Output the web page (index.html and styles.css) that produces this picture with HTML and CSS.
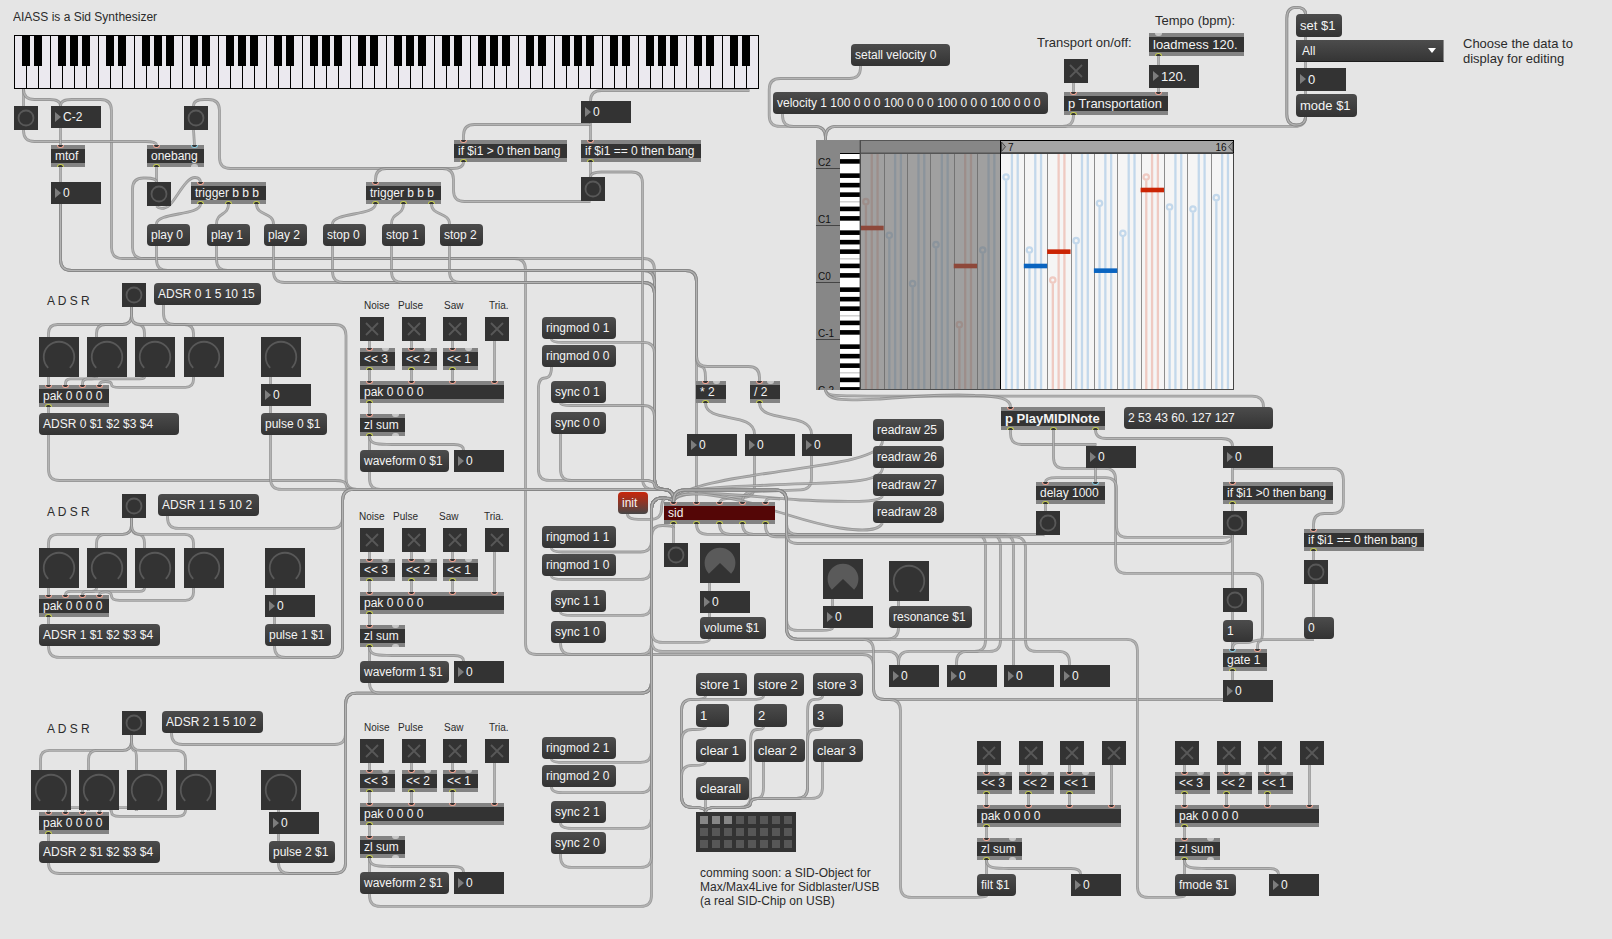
FILE: index.html
```html
<!DOCTYPE html>
<html lang="en">
<head>
<meta charset="utf-8">
<title>AIASS is a Sid Synthesizer</title>
<link rel="stylesheet" href="styles.css">
</head>
<body>
<main class="patcher" id="patcher">
  <svg class="wires" id="wires" width="1612" height="939" viewBox="0 0 1612 939"></svg>
  <div class="kslider" id="kslider"></div>
  <svg class="seq" id="seq" width="418" height="250" viewBox="816 140 418 250"></svg>
  <div class="umenu"><span>All</span><i class="umenu-arrow"></i></div>
  <div class="preset" id="preset"></div>
</main>
<script src="patch.js"></script>
</body>
</html>
```

FILE: styles.css
```css
* { box-sizing: border-box; }

body {
  margin: 0;
  background: #e5e5e5;
  font-family: "Liberation Sans", Arial, sans-serif;
  font-size: 12px;
  color: #2b2b2b;
}

.patcher {
  position: relative;
  width: 1612px;
  height: 939px;
  overflow: hidden;
}

.wires { position: absolute; left: 0; top: 0; fill: none; }
.wire-edge { stroke: #878787; stroke-width: 2.8; stroke-opacity: .8; }
.wire-core { stroke: #b3b3b3; stroke-width: 1.2; }

.node {
  position: absolute;
  height: 22px;
  line-height: 22px;
  color: #f4f4f4;
  white-space: pre;
}
.tall { height: 23px; line-height: 23px; font-size: 13px; }

.msg {
  padding-left: 4px;
  border-radius: 4px;
  background: linear-gradient(#4c4c4c, #333);
}
.init { background: linear-gradient(#c9260a, #474747); }

.obj {
  padding-left: 4px;
  background: #333;
  border-top: 4px solid #838383;
  border-bottom: 4px solid #838383;
  line-height: 14px;
}
.obj.tall { line-height: 15px; }
.sid { background: #540606; }
.bold { font-weight: bold; }

.port {
  position: absolute;
  width: 7px;
  height: 4px;
  background: #333;
  border: 1px solid #f0a594;
}
.in { top: -4px; height: 3px; border-top: 0; border-radius: 0 0 4px 4px; }
.out { bottom: -4px; height: 3px; border-bottom: 0; border-radius: 4px 4px 0 0; border-color: #c5cc54; }
.cold { border-color: #8ccbe0; }
.idle { background: #c6c6c6; border-color: #c6c6c6; }

.num { width: 50px; padding-left: 12px; background: #333; }
.num::before {
  content: "";
  position: absolute;
  left: 4px;
  top: 6px;
  border-left: 6px solid #7d7d7d;
  border-top: 5px solid transparent;
  border-bottom: 5px solid transparent;
}

.icon { position: absolute; display: block; background: #333; }
.icon path, .icon circle { fill: none; stroke: #585858; stroke-width: 1.8; }
.icon .pie { fill: #5a5a5a; stroke: none; }

.label { position: absolute; line-height: 14px; white-space: pre; }
.label.small { font-size: 10px; line-height: 12px; }
.label.large { font-size: 13px; line-height: 15px; }

.kslider {
  position: absolute;
  left: 14px;
  top: 35px;
  height: 54px;
  display: flex;
  border: 1px solid #000;
}
.key { position: relative; width: 12px; background: #ebe9ef; border-right: 1px solid #000; }
.key:last-child { width: 11px; border-right: 0; }
.key.sharp::after {
  content: "";
  position: absolute;
  z-index: 1;
  left: 7px;
  top: 0;
  width: 8px;
  height: 30px;
  background: #000;
}

.seq { position: absolute; left: 816px; top: 140px; font-size: 10px; }

.umenu {
  position: absolute;
  left: 1296px;
  top: 40px;
  width: 148px;
  height: 22px;
  padding: 0 7px 0 6px;
  display: flex;
  align-items: center;
  justify-content: space-between;
  color: #f4f4f4;
  background: linear-gradient(#4c4c4c, #353535);
  border-right: 1px solid #8a8a8a;
  border-bottom: 1px solid #1d1d1d;
}
.umenu-arrow {
  border-top: 5px solid #fff;
  border-left: 4.5px solid transparent;
  border-right: 4.5px solid transparent;
}

.preset {
  position: absolute;
  left: 696px;
  top: 812px;
  width: 100px;
  height: 40px;
  padding: 4px;
  display: grid;
  grid-template-columns: repeat(8, 8px);
  grid-auto-rows: 8px;
  gap: 4px;
  background: #333;
}
.slot { background: #575757; }
.slot.used { background: #868686; }
```

FILE: patch.js
```javascript
const patcher = document.getElementById('patcher');

function add(cls, x, y, w, html) {
  const el = document.createElement('div');
  el.className = cls;
  el.style.left = x + 'px';
  el.style.top = y + 'px';
  if (w) el.style.width = w + 'px';
  el.innerHTML = html;
  patcher.appendChild(el);
}

const esc = s => s.replace(/</g, '&lt;').replace(/>/g, '&gt;');
const msg = (x, y, w, text, extra = '') => add('node msg ' + extra, x, y, w, esc(text));
const num = (x, y, text = '0', extra = '') => add('node num ' + extra, x, y, 0, text);
const label = (x, base, text, extra = '') =>
  add('label ' + extra, x, base - (extra === 'small' ? 9 : extra === 'large' ? 12 : 11), 0, text);

// Ports are offsets from the box's left edge; "c" marks a cold port, "i" an idle one.
function obj(x, y, w, text, ins, outs, extra = '') {
  const port = side => p => {
    const s = String(p);
    const kind = s.endsWith('c') ? ' cold' : s.endsWith('i') ? ' idle' : '';
    return `<i class="port ${side}${kind}" style="left:${parseFloat(s) - 3.5}px"></i>`;
  };
  add('node obj ' + extra, x, y, w, esc(text) + ins.map(port('in')).join('') + outs.map(port('out')).join(''));
}

function icon(x, y, size, shape) {
  add('icon', x, y, 0, `<svg width="${size}" height="${size}" style="display:block">${shape}</svg>`);
}
const bang = (x, y) => icon(x, y, 24, '<circle cx="12" cy="12" r="7.5"/>');
const toggle = (x, y) => icon(x, y, 24, '<path d="M6 6L18 18M18 6L6 18"/>');
const dial = (x, y) => icon(x, y, 40, '<path d="M9.200 30.800A15.270 15.270 0 1 1 30.800 30.800"/>');
const pie = (x, y) => icon(x, y, 40, '<path class="pie" d="M20 20L8.900 30.700A15.400 15.400 0 1 1 31.100 30.700Z"/>');

/* ---- patch cords ---- */
const cords = [];
function cord(points, radius = 11) {
  const p = points.split(' ').map(s => s.split(',').map(Number));
  let d = `M${p[0]}`;
  for (let i = 1; i < p.length - 1; i++) {
    const [a, b, c] = [p[i - 1], p[i], p[i + 1]];
    const la = Math.hypot(a[0] - b[0], a[1] - b[1]);
    const lc = Math.hypot(c[0] - b[0], c[1] - b[1]);
    const ra = Math.min(radius, i === 1 ? la : la / 2);
    const rc = Math.min(radius, i === p.length - 2 ? lc : lc / 2);
    const s = [b[0] + (a[0] - b[0]) * ra / la, b[1] + (a[1] - b[1]) * ra / la];
    const e = [b[0] + (c[0] - b[0]) * rc / lc, b[1] + (c[1] - b[1]) * rc / lc];
    d += `L${s}Q${b} ${e}`;
  }
  cords.push(d + `L${p[p.length - 1]}`);
}
const curve = d => cords.push(d);
const drop = (x, y1, y2) => cords.push(`M${x},${y1}V${y2}`);
const swing = (x1, y1, x2, y2) => {
  const m = (y1 + y2) / 2;
  cords.push(`M${x1},${y1}C${x1},${m + 2} ${x2},${m - 2} ${x2},${y2}`);
};

/* ---- keyboard, note selection, play / stop ---- */
document.getElementById('kslider').innerHTML = Array.from({ length: 62 }, (_, i) =>
  `<div class="key${i < 61 && [0, 1, 3, 4, 5].includes(i % 7) ? ' sharp' : ''}"></div>`).join('');

label(13, 21, 'AIASS is a Sid Synthesizer');
bang(14, 106); num(51, 106, 'C-2'); bang(184, 106);
obj(51, 145, 34, 'mtof', [9.5], [9.5]);
obj(147, 145, 57, 'onebang', [9.5, '47.5c'], [9.5, '47.5i']);
num(51, 182); bang(147, 182);
obj(191, 182, 75, 'trigger b b b', [9.5], [9.5, 37.5, 65.5]);
obj(366, 182, 75, 'trigger b b b', [9.5], [9.5, 37.5, 65.5]);
[[147, 'play 0'], [207, 'play 1'], [264, 'play 2'], [323, 'stop 0'], [382, 'stop 1'], [440, 'stop 2']]
  .forEach(([x, t]) => msg(x, 224, 43, t));
num(581, 101);
obj(454, 140, 113, 'if $i1 > 0 then bang', [9.5], [9.5]);
obj(581, 140, 120, 'if $i1 == 0 then bang', [9.5], [9.5]);
bang(581, 177);

drop(23.5, 89, 106);
cord('23.5,89 23.5,99.5 60.5,99.5 60.5,106');
cord('1232.5,702 1232.5,699.5 873.5,699.5 873.5,654.5 525.5,654.5 525.5,258.5 111.5,258.5 111.5,99.5 60.5,99.5 60.5,106');
cord('23.5,130 23.5,141.5 156.5,141.5 156.5,145');
drop(60.5, 128, 145); drop(60.5, 167, 182);
cord('60.5,204 60.5,270.5 696.5,270.5 696.5,502');
cord('463.5,162 463.5,168.5 219.5,168.5 219.5,99.5 193.5,99.5 193.5,106');
curve('M193.5,130L194.5,145');
drop(156.5, 167, 182);
cord('156.5,182 156.5,178 132.5,178 132.5,258.5 654.5,258.5 654.5,489.5 673.5,489.5 673.5,502');
curve('M156.5,206C160,210 167,209 171.5,203C180,192 187,177.5 195,177.5C199,177.5 200.5,180 200.5,183');
swing(200.5, 204, 156.5, 224); swing(228.5, 204, 216.5, 224); swing(256.5, 204, 273.5, 224);
swing(375.5, 204, 332.5, 224); swing(403.5, 204, 391.5, 224); swing(431.5, 204, 449.5, 224);
[[156.5, 270.5], [216.5, 270.5], [273.5, 282.5], [332.5, 282.5], [391.5, 282.5], [449.5, 282.5]]
  .forEach(([x, y]) => cord(`${x},246 ${x},${y} 654.5,${y} 654.5,489.5 673.5,489.5 673.5,502`));
cord('749.5,90.5 590.5,90.5 590.5,101');
drop(590.5, 123, 140); drop(590.5, 162, 177);
cord('590.5,124.5 463.5,124.5 463.5,140');
cord('590.5,177 590.5,172 642.5,172 642.5,489.5 673.5,489.5 673.5,502');
cord('590.5,201.5 453.5,201.5 453.5,168.5 375.5,168.5 375.5,182');

/* ---- three voices ---- */
const voices = [
  { n: 0, bangY: 283, preset: 'ADSR 0 1 5 10 15', px: 154, pw: 107, dialX: 39, dialY: 337, splitY: 324.5, pulseDial: 261, pulse: 261, numY: 384, pakY: 385, msgY: 413, mw: 140, waveY: 317, lx: 364, ring: [317, 345, 381, 412] },
  { n: 1, bangY: 494, preset: 'ADSR 1 1 5 10 2', px: 158, pw: 101, dialX: 39, dialY: 548, splitY: 534.3, pulseDial: 265, pulse: 265, numY: 595, pakY: 595, msgY: 624, mw: 121, waveY: 528, lx: 359, ring: [526, 554, 590, 621] },
  { n: 2, bangY: 711, preset: 'ADSR 2 1 5 10 2', px: 162, pw: 101, dialX: 31, dialY: 770, splitY: 750.4, pulseDial: 261, pulse: 269, numY: 812, pakY: 812, msgY: 841, mw: 121, waveY: 739, lx: 364, ring: [737, 765, 801, 832] }
];

function switches(x, y) {
  [0, 42, 83, 125].forEach(dx => toggle(x + dx, y));
  [['<< 3', 0], ['<< 2', 42], ['<< 1', 83]].forEach(([t, dx]) => {
    obj(x + dx, y + 31, 35, t, [9.5, '25.5i'], [9.5]);
    drop(x + dx + 9.5, y + 24, y + 31);
    drop(x + dx + 9.5, y + 53, y + 64);
  });
  drop(x + 134.5, y + 24, y + 64);
  obj(x, y + 64, 144, 'pak 0 0 0 0', [9.5, 51, 92.5, 134], [9.5]);
  obj(x, y + 97, 45, 'zl sum', [9.5, '35.5i'], [9.5, '35.5i']);
  drop(x + 9.5, y + 86, y + 97);
  drop(x + 9.5, y + 119, y + 133);
  const by = y + 127.5;
  curve(`M${x + 9.5},${y + 119}C${x + 9.5},${by + 1} ${x + 20},${by - .5} ${x + 32},${by}H${x + 94}Q${x + 103.5},${by} ${x + 103.5},${y + 133}`);
  num(x + 94, y + 133);
}

voices.forEach(v => {
  label(47, v.bangY + 22, 'A D S R');
  bang(122, v.bangY);
  msg(v.px, v.bangY, v.pw, v.preset);
  [0, 48, 96, 145].forEach(dx => {
    dial(v.dialX + dx, v.dialY);
    const x = v.dialX + dx + 9.5;
    cord(`131.5,${v.bangY + 24} 131.5,${v.splitY} ${x},${v.splitY} ${x},${v.dialY}`, 9);
  });
  dial(v.pulseDial, v.dialY);
  num(v.pulse, v.numY);
  obj(39, v.pakY, 70, 'pak 0 0 0 0', [9.5, 26.5, 43.5, 60.5], [9.5]);
  msg(39, v.msgY, v.mw, `ADSR ${v.n} $1 $2 $3 $4`);
  msg(v.pulse, v.msgY, 66, `pulse ${v.n} $1`);
  drop(48.5, v.dialY + 40, v.pakY);
  drop(48.5, v.pakY + 22, v.msgY);
  drop(v.pulse + 9.5, v.dialY + 40, v.numY);
  drop(v.pulse + 9.5, v.numY + 22, v.msgY);
  switches(360, v.waveY);
  [['Noise', 0], ['Pulse', 34], ['Saw', 80], ['Tria.', 125]].forEach(([t, dx]) =>
    label(v.lx + dx, v.waveY - 8, t, 'small'));
  msg(360, v.waveY + 133, 89, `waveform ${v.n} $1`);
  msg(542, v.ring[0], 74, `ringmod ${v.n} 1`);
  msg(542, v.ring[1], 74, `ringmod ${v.n} 0`);
  msg(551, v.ring[2], 55, `sync ${v.n} 1`);
  msg(551, v.ring[3], 55, `sync ${v.n} 0`);
});

cord('96.5,377 96.5,378.8 65.5,378.8 65.5,385', 5);
cord('144.5,377 144.5,378.8 82.5,378.8 82.5,385', 5);
cord('193.5,377 193.5,387.3 111.5,387.3 111.5,381.5 99.5,381.5 99.5,385', 8);
cord('96.5,588 96.5,591.3 65.5,591.3 65.5,595', 5);
cord('144.5,588 144.5,591.3 82.5,591.3 82.5,595', 5);
cord('193.5,588 193.5,600.3 111.5,600.3 111.5,591.8 99.5,591.8 99.5,595', 8);
cord('88.5,811 88.5,807.7 65.5,807.7 65.5,812', 4);
cord('136.5,811 136.5,807.7 82.5,807.7 82.5,812', 4);
cord('185.5,810 185.5,816.4 111.5,816.4 111.5,807.7 99.5,807.7 99.5,812', 8);

const busTop = '640,489.4 673.5,489.4 673.5,502';
cord('163.5,305 163.5,324.5 346,324.5 346,489.4 ' + busTop);
cord('48.5,435 48.5,480.5 346,480.5 346,489.4 ' + busTop);
cord('270.5,435 270.5,489.4 ' + busTop);
cord('369.5,472 369.5,489.4 ' + busTop);
cord('167.5,516 167.5,528.4 342.6,528.4 342.6,489.4 ' + busTop);
cord('48.5,646 48.5,657.4 342.6,657.4 342.6,489.4 ' + busTop);
cord('274.5,646 274.5,657.4 342.6,657.4 342.6,489.4 ' + busTop);

const busLow = '651.5,498 673.5,498 673.5,503';
cord('171.5,733 171.5,744.5 345.6,744.5 345.6,693.2 651.5,693.2 ' + busLow);
cord('48.5,863 48.5,873.5 345.6,873.5 345.6,693.2 651.5,693.2 ' + busLow);
cord('278.5,863 278.5,873.5 345.6,873.5 345.6,693.2 651.5,693.2 ' + busLow);
cord('369.5,683 369.5,693.2 651.5,693.2 ' + busLow);
cord('369.5,894 369.5,906.4 651.5,906.4 ' + busLow);

cord('551.5,339 551.5,342.4 654.5,342.4 654.5,489.5 673.5,489.5 673.5,502');
cord('551.5,367 551.5,378 538.4,378 538.4,480.4 654.5,480.4 654.5,489.5 673.5,489.5 673.5,502');
cord('560.5,403 560.5,405.5 654.5,405.5 654.5,489.5 673.5,489.5 673.5,502');
cord('560.5,434 560.5,480.4 654.5,480.4 654.5,489.5 673.5,489.5 673.5,502');
[[551.5, 548, 552], [551.5, 576, 579.4], [560.5, 612, 615.4], [560.5, 643, 654.4],
 [551.5, 759, 762.4], [551.5, 787, 792.7], [560.5, 823, 828.4], [560.5, 854, 867.4]]
  .forEach(([x, y, b]) => cord(`${x},${y} ${x},${b} 651.5,${b} ${busLow}`));

/* ---- sid ---- */
msg(618, 492, 30, 'init', 'init');
cord('627.5,514 627.5,519.3 661.5,519.3 661.5,498 673.5,498 673.5,503');
obj(664, 502, 111, 'sid', [9.5, 32.5, 55.5, 78.5, 101.5], [9.5, 32.5, 55.5, 78.5, 101.5], 'sid');
obj(696, 381, 30, '* 2', [9.5, '20i'], [9.5]);
obj(750, 381, 30, '/ 2', [9.5, '20i'], [9.5]);
num(687, 434); num(745, 434); num(802, 434);
cord('60.5,204 60.5,270.5 696.5,270.5 696.5,366.5 705.5,366.5 705.5,381');
cord('60.5,204 60.5,270.5 696.5,270.5 696.5,366.5 759.5,366.5 759.5,381');
curve('M705.5,403C706,424 754.5,411 754.5,434');
curve('M759.5,403C760,424 811.5,411 811.5,434');
cord('754.5,456 754.5,497 719.5,498.5 719.5,503');
cord('811.5,456 811.5,489.5 742.5,492 742.5,502');
[['25', 419], ['26', 446], ['27', 474], ['28', 501]].forEach(([t, y]) => msg(873, y, 71, 'readraw ' + t));
curve('M882.5,441C882,462 800,467 750,476C710,482 676,490 673.5,502');
curve('M882.5,468C882,485 830,482 770,485C720,487 676,487 673.5,502');
curve('M882.5,496C880,503 850,502 800,500C750,497 676,486 673.5,502');
curve('M882.5,523C878,532 860,531 840,528C810,523 790,515 775,511C740,498 676,485 673.5,502');
curve('M765.5,503C766,497 772,498 780,499');

bang(664, 543);
drop(673.5, 524, 543);
cord('673.5,528 673.5,525.5 651.5,525.5 651.5,651.4 898.5,651.4 898.5,665');
cord('696.5,524 696.5,534.3 985.5,534.3 985.5,651.4 898.5,651.4 898.5,665');
cord('719.5,524 719.5,534.3 1000.5,534.3 1000.5,651.4 956.5,651.4 956.5,665');
cord('742.5,524 742.5,534.3 1013.5,534.3 1013.5,665');
cord('765.5,524 765.5,536.8 1025.5,536.8 1025.5,651.4 1069.5,651.4 1069.5,665');
[889, 947, 1004, 1060].forEach(x => num(x, 665));

pie(700, 543); num(700, 591); msg(700, 617, 66, 'volume $1');
drop(709.5, 583, 591); drop(709.5, 613, 617);
cord('709.5,639 709.5,642.4 651.5,642.4 ' + busLow);
pie(823, 559); num(823, 606);
drop(832.5, 599, 606);
dial(889, 561); msg(889, 606, 83, 'resonance $1');
drop(898.5, 601, 606);

const busMid = '786.5,490 673.5,490 673.5,502';
cord('832.5,628 832.5,630.4 786.5,630.4 ' + busMid);
cord('898.5,628 898.5,639 786.5,639 ' + busMid);
cord('1184.5,896 1184.5,897.4 1137.4,897.4 1137.4,639.3 786.5,639.3 ' + busMid);
cord('986.5,896 986.5,897.4 900.5,897.4 900.5,699.5 873.5,699.5 873.5,639.3 786.5,639.3 ' + busMid);
cord('1045.5,535 1045.5,534.5 786.5,534.5 ' + busMid);
cord('1232.5,535 1232.5,543.5 786.5,543.5 ' + busMid);

/* ---- preset storage ---- */
[['store 1', 696, 673, 51], ['store 2', 754, 673, 50], ['store 3', 813, 673, 50],
 ['1', 696, 704, 33], ['2', 754, 704, 33], ['3', 813, 704, 30],
 ['clear 1', 696, 739, 50], ['clear 2', 754, 739, 51], ['clear 3', 813, 739, 50],
 ['clearall', 696, 777, 53]].forEach(([t, x, y, w]) => msg(x, y, w, t, 'tall'));
const store = '681.5,807.4 705.5,807.4 705.5,812';
cord('705.5,696 705.5,699.4 681.5,699.4 ' + store);
cord('763.5,696 763.5,699.4 681.5,699.4 ' + store);
cord('705.5,727 705.5,729.5 681.5,729.5 ' + store);
cord('705.5,762 705.5,765.4 681.5,765.4 ' + store);
drop(705.5, 800, 812);
cord('763.5,727 763.5,729.5 750.6,729.5 750.6,807.4 705.5,807.4 705.5,812');
cord('763.5,762 763.5,798.4 750.6,798.4 750.6,807.4 705.5,807.4 705.5,812');
cord('822.5,696 822.5,699.4 807.6,699.4 807.6,798.4 750.6,798.4 750.6,807.4 705.5,807.4 705.5,812');
cord('822.5,727 822.5,729.5 807.6,729.5 807.6,798.4 750.6,798.4 750.6,807.4 705.5,807.4 705.5,812');
cord('822.5,762 822.5,798.4 750.6,798.4 750.6,807.4 705.5,807.4 705.5,812');
document.getElementById('preset').innerHTML = Array.from({ length: 24 }, (_, i) =>
  `<i class="slot${i < 3 ? ' used' : ''}"></i>`).join('');
label(700, 877, 'comming soon: a SID-Object for\nMax/Max4Live for Sidblaster/USB\n(a real SID-Chip on USB)');

/* ---- transport ---- */
msg(851, 44, 99, 'setall velocity 0');
msg(773, 92, 275, 'velocity 1 100 0 0 0 100 0 0 0 100 0 0 0 100 0 0 0');
label(1155, 25, 'Tempo (bpm):', 'large');
label(1037, 47, 'Transport on/off:', 'large');
obj(1149, 33, 95, 'loadmess 120.', ['9.5i'], [9.5], 'tall');
num(1149, 65, '120.', 'tall');
toggle(1064, 59);
obj(1064, 92, 104, 'p Transportation', [9.5, 94.5], [9.5], 'tall');
msg(1296, 14, 46, 'set $1', 'tall');
num(1296, 68, '0', 'tall');
msg(1296, 94, 61, 'mode $1', 'tall');
label(1463, 48, 'Choose the data to\ndisplay for editing', 'large');
drop(1073.5, 83, 92); drop(1158.5, 56, 65); drop(1158.5, 88, 92);
drop(1305.5, 37, 40); drop(1305.5, 62, 68); drop(1305.5, 91, 94);
const seqIn = '825.5,126.4 825.5,140';
cord('860.5,66 860.5,78.5 769.2,78.5 769.2,126.4 ' + seqIn);
cord('782.5,114 782.5,126.4 ' + seqIn);
cord('1073.5,115 1073.5,126.4 ' + seqIn);
cord('1305.5,117 1305.5,126.4 ' + seqIn);
cord('1305.5,117 1305.5,125 1286.8,125 1286.8,7.4 1305.5,7.4 1305.5,14');
cord('1305.5,117 1305.5,125 1286.8,125 1286.8,7.4 1305.5,7.4 1305.5,14');
curve('M825.5,390C826,397 840,395.5 870,396.2H1252Q1263.5,396.2 1263.5,407');
curve('M825.5,390C827,402 850,400.5 880,399C930,395 960,394.5 975,395.5C1000,396 1010.5,399 1010.5,407');

/* ---- note output ---- */
obj(1001, 407, 104, 'p PlayMIDINote', [9.5], [9.5, 52, 94.5], 'tall bold');
msg(1124, 407, 149, '2 53 43 60. 127 127');
num(1086, 446); num(1223, 446);
obj(1036, 482, 69, 'delay 1000', [9.5, '59.5c'], [9.5]);
bang(1036, 511);
obj(1223, 482, 110, 'if $i1 >0 then bang', [9.5], [9.5]);
bang(1223, 511);
obj(1304, 529, 120, 'if $i1 == 0 then bang', [9.5], [9.5]);
bang(1304, 560); bang(1223, 588);
msg(1223, 620, 30, '1'); msg(1304, 617, 30, '0');
obj(1223, 649, 44, 'gate 1', ['9.5c', 34.5], [9.5]);
num(1223, 680);
cord('1010.5,430 1010.5,444.5 1096.5,444.5');
cord('1053.5,430 1053.5,468.4 1115.6,468.4 1115.6,573.4 1262.6,573.4 1262.6,641 1257.5,641 1257.5,649');
cord('1095.5,430 1095.5,438.5 1232.5,438.5 1232.5,446');
cord('1232.5,535 1232.5,537.4 1116.5,537.4 1116.5,477.6 1045.5,477.6 1045.5,482');
cord('1232.5,468.4 1343.4,468.4 1343.4,513.5 1313.5,513.5 1313.5,529');
drop(1095.5, 468, 482); drop(1045.5, 504, 511);
drop(1232.5, 468, 482); drop(1232.5, 504, 511); drop(1232.5, 535, 588);
drop(1232.5, 612, 620); drop(1232.5, 642, 649); drop(1232.5, 671, 680);
drop(1313.5, 551, 560); drop(1313.5, 584, 617);
curve('M1314,639.6H1264C1253,639.6 1253,642.6 1246,642.6H1238Q1232.5,642.6 1232.5,649');

switches(977, 741); msg(977, 874, 39, 'filt $1');
switches(1175, 741); msg(1175, 874, 61, 'fmode $1');

document.getElementById('wires').innerHTML = cords.map(d =>
  `<path class="wire-edge" d="${d}"/><path class="wire-core" d="${d}"/>`).join('');

/* ---- step sequencer ---- */
const rect = (x, y, w, h, fill, more = '') => `<rect x="${x}" y="${y}" width="${w}" height="${h}" fill="${fill}" ${more}/>`;
const text = (x, y, t) => `<text x="${x}" y="${y}" fill="#111">${t}</text>`;
const top0 = 154, step = 23.36, left0 = 860.3;
let s = rect(816, 140, 418, 250, '#878787');
s += rect(840, 153, 20, 237, '#fff');
for (let o = -1; o < 5; o++) {
  const y = 168.6 + 57 * o;
  [1, 3, 5, 8, 10].forEach(k => {
    const ky = y + 4.75 * k;
    if (ky > 154) s += rect(840, ky, 20, 4.6, '#000');
  });
  if (o >= 0) s += rect(840, y + 4.75 * 7 - .5, 20, 1, '#bbb');
  if (o >= 0) s += rect(816, y - .6, 24, 1, '#444');
}
s += rect(840, 153, 20, 1, '#000');
['C2', 'C1', 'C0', 'C-1', 'C-2'].forEach((t, i) => s += text(818, 166 + 57 * i, t));
s += rect(860, top0, 374, 236, '#f5f5f5');
const pitch = [605, 706, 851, 734, 974, 750, 531, 750, 840, 722, 610, 700, 531, 621, 627, 593];
pitch.forEach((v, i) => {
  const x = left0 + step * i, red = i % 4 === 0, c = red ? '#efcac2' : '#c3d8eb', y = v / 3;
  s += rect(x + 4.5, y + 3.5, 2.3, 390 - y, c);
  s += rect(x + 10.3, top0, 2.3, 236, c) + rect(x + 16.1, top0, 2.3, 236, c);
  s += `<circle cx="${x + 5.6}" cy="${y}" r="2.7" fill="#f5f5f5" stroke="${c}" stroke-width="2.2"/>`;
  s += rect(Math.round(x), top0, 1, 236, '#8d8d8d');
});
[[0, 684, 1], [4, 798, 1], [7, 798, 0], [8, 755, 1], [10, 812, 0], [12, 570, 1]].forEach(([i, y, red]) =>
  s += rect(left0 + step * i, y / 3 - 2.3, step, 4.6, red ? '#cb2404' : '#0a64c0'));
s += rect(860, top0, 140, 236, '#626262', 'fill-opacity=".58"');
s += rect(860, 152.5, 140, 1.5, '#555') + rect(860, 140, 140, 1, '#555') + rect(859.6, 140, 1.4, 250, '#4c4c4c');
s += rect(1000.5, 140.5, 233, 12.5, '#a5a5a5', 'stroke="#000"');
s += rect(1000, 140, 1, 250, '#000') + rect(1233, 153, 1, 237, '#444') + rect(860, 389, 374, 1, '#4c4c4c');
s += '<path d="M1001.5 142V151.500L1005.500 146.700Z M1233 142V151.500L1228.500 146.700Z" fill="#909090" stroke="#333" stroke-width=".8"/>';
s += text(1008, 151, '7') + text(1215.5, 151, '16');
document.getElementById('seq').innerHTML = s;
```
